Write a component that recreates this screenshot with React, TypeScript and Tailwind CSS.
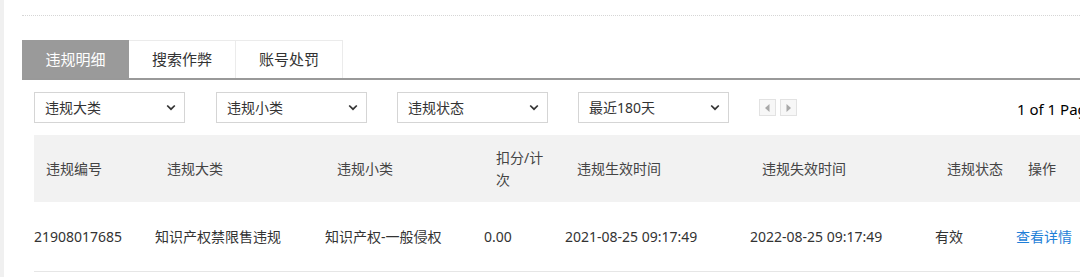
import React from 'react';

const font = { fontFamily: '"Noto Sans", "Noto Sans CJK SC", sans-serif' };

const Select = ({ label }: { label: string }) => (
  <div className="flex h-[31px] w-[151px] items-center justify-between border border-[#d5d5d5] bg-white pl-[10px] pr-[8px] text-[14px] text-[#333]">
    <span>{label}</span>
    <svg width="10" height="7" viewBox="0 0 10 7" className="text-[#333]">
      <path d="M1.2 1.5L5 5.2l3.8-3.7" fill="none" stroke="currentColor" strokeWidth="1.7" />
    </svg>
  </div>
);

const Tab = ({ label, active }: { label: string; active?: boolean }) => (
  <div
    className={
      active
        ? 'flex h-[38px] w-[107px] items-center justify-center bg-[#9a9a9a] text-[15px] text-white'
        : 'flex h-[38px] w-[107px] items-center justify-center border-t border-r border-[#ebebeb] bg-white text-[15px] text-[#333]'
    }
  >
    {label}
  </div>
);

const cols = 'grid grid-cols-[121px_170px_159px_81px_185px_185px_81px_140px]';

const headers = ['违规编号', '违规大类', '违规小类', '扣分/计次', '违规生效时间', '违规失效时间', '违规状态', '操作'];
const row = ['21908017685', '知识产权禁限售违规', '知识产权-一般侵权', '0.00', '2021-08-25 09:17:49', '2022-08-25 09:17:49', '有效'];

export default function App() {
  return (
    <div className="flex h-[277px] w-[1080px] overflow-hidden bg-white" style={font}>
      <div className="w-[4px] shrink-0 bg-[#f0f0f0]" />
      <div className="flex-1 pl-[18px]">
        <div className="mt-[15px] border-t border-dotted border-[#d6d6d6]" />

        <div className="mt-[24px] flex border-b-[2px] border-[#999]">
          <Tab label="违规明细" active />
          <Tab label="搜索作弊" />
          <Tab label="账号处罚" />
        </div>

        <div className="pl-[12px]">
          <div className="mt-[12px] flex items-center">
            <Select label="违规大类" />
            <div className="ml-[31px]"><Select label="违规小类" /></div>
            <div className="ml-[30px]"><Select label="违规状态" /></div>
            <div className="ml-[30px]"><Select label="最近180天" /></div>
            <div className="ml-[30px] flex gap-[4px]">
              <div className="flex h-[17px] w-[17px] items-center justify-center border border-[#e2e2e2] bg-[#f7f7f7]">
                <svg width="5" height="8" viewBox="0 0 5 8"><path d="M4.5 0v8L0 4z" fill="#a8a8a8" /></svg>
              </div>
              <div className="flex h-[17px] w-[17px] items-center justify-center border border-[#e2e2e2] bg-[#f7f7f7]">
                <svg width="5" height="8" viewBox="0 0 5 8"><path d="M0.5 0v8L5 4z" fill="#a8a8a8" /></svg>
              </div>
            </div>
            <div className="ml-[220px] whitespace-nowrap pt-[3px] text-[15px] text-black">1 of 1 Page</div>
          </div>

          <div className={`${cols} mt-[12px] h-[67px] w-[1200px] bg-[#f2f2f2] text-[14px] text-[#444]`}>
            {headers.map((h) => (
              <div key={h} className="flex items-center pl-[12px] leading-[22px]">
                {h === '扣分/计次' ? (
                  <span>扣分/计<br />次</span>
                ) : (
                  h
                )}
              </div>
            ))}
          </div>

          <div className={`${cols} h-[70px] w-[1200px] border-b border-[#e6e6e6] text-[14px] text-[#333]`}>
            {row.map((c) => (
              <div key={c} className="flex items-center whitespace-nowrap">{c}</div>
            ))}
            <div className="flex items-center text-[#1f7fd8]">查看详情</div>
          </div>
        </div>
      </div>
    </div>
  );
}
